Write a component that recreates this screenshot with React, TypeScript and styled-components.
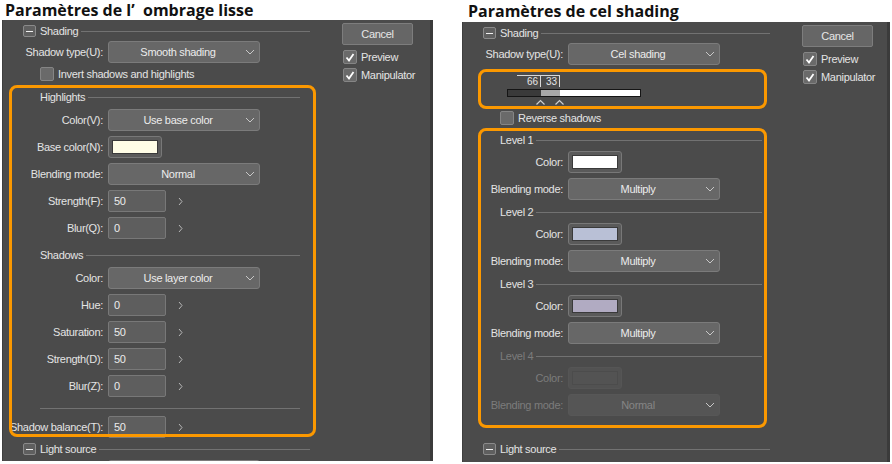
import React from 'react';
import styled, { createGlobalStyle } from 'styled-components';

const UI_FONT = `"Liberation Sans", Arial, sans-serif`;
const ORANGE = '#fb9800';

const GlobalStyle = createGlobalStyle`
  html, body { margin: 0; padding: 0; background: #fff; }
  body { width: 892px; height: 464px; overflow: hidden; }
`;

const Page = styled.div`
  display: flex;
  align-items: flex-start;
  width: 892px;
  height: 464px;
`;

const Column = styled.section<{ $width: number; $gap: number }>`
  width: ${p => p.$width}px;
  margin-left: ${p => p.$gap}px;
  display: flex;
  flex-direction: column;
  flex: none;
`;

const Title = styled.h1<{ $h: number; $indent: number; $top: number }>`
  margin: 0;
  height: ${p => p.$h}px;
  box-sizing: border-box;
  padding: ${p => p.$top}px 0 0 ${p => p.$indent}px;
  font: 700 16px/20px "Open Sans", "Noto Sans", sans-serif;
  color: #111;
  white-space: nowrap;
  flex: none;
`;

const Dialog = styled.div<{ $h: number }>`
  display: flex;
  height: ${p => p.$h}px;
  flex: none;
  background: #4b4b4b;
  box-shadow: inset 1px 0 #3e3e3e, inset -3px 0 #3b3b3b;
  overflow: hidden;
  font: 11px ${UI_FONT};
  letter-spacing: -0.3px;
  color: #e4e4e4;
`;

const Form = styled.div`
  width: 316px;
  flex: none;
  display: flex;
  flex-direction: column;
  padding-top: 4px;
  & > * { flex-shrink: 0; }
`;

const Side = styled.div`
  margin-left: 24px;
  padding-top: 3px;
  display: flex;
  flex-direction: column;
`;

const CancelButton = styled.div`
  width: 71px;
  height: 22px;
  box-sizing: border-box;
  background: #666;
  border: 1px solid #7d7d7d;
  border-radius: 2px;
  display: flex;
  align-items: center;
  justify-content: center;
  color: #e6e6e6;
`;

const SectionHeader = styled.div<{ $mt?: number }>`
  display: flex;
  align-items: center;
  height: 14px;
  margin-top: ${p => p.$mt ?? 0}px;
  padding-left: 21px;
  padding-right: 8px;
`;

const MinusBox = styled.span`
  width: 13px;
  height: 12px;
  box-sizing: border-box;
  background: #5f5f5f;
  border: 1px solid #8a8a8a;
  border-radius: 2px;
  margin-right: 4px;
  display: flex;
  align-items: center;
  justify-content: center;
  &::before {
    content: '';
    width: 7px;
    height: 1px;
    background: #f0f0f0;
  }
`;

const Rule = styled.span`
  flex: 1;
  height: 1px;
  background: #727272;
  margin-left: 3px;
`;

const SubHeader = styled.div<{ $mt?: number; $dim?: boolean; $end?: number }>`
  display: flex;
  align-items: center;
  height: 14px;
  flex: none;
  margin-top: ${p => p.$mt ?? 0}px;
  padding-left: 38px;
  padding-right: ${p => p.$end ?? 18}px;
  color: ${p => (p.$dim ? '#7c7c7c' : '#e4e4e4')};
`;

const Separator = styled.div<{ $mt: number }>`
  height: 1px;
  flex: none;
  background: #727272;
  margin: ${p => p.$mt}px 18px 0 38px;
`;

const Row = styled.div<{ $mt?: number }>`
  display: flex;
  align-items: center;
  height: 22px;
  margin-top: ${p => p.$mt ?? 5}px;
  flex: none;
`;

const Label = styled.span<{ $dim?: boolean }>`
  width: 101px;
  margin-right: 5px;
  flex: none;
  display: flex;
  justify-content: flex-end;
  white-space: nowrap;
  color: ${p => (p.$dim ? '#7c7c7c' : '#e4e4e4')};
`;

const SelectBox = styled.div<{ $dim?: boolean }>`
  width: 152px;
  height: 22px;
  box-sizing: border-box;
  flex: none;
  display: flex;
  align-items: center;
  background: ${p => (p.$dim ? '#555' : '#676767')};
  border: 1px solid ${p => (p.$dim ? '#575757' : '#7b7b7b')};
  border-radius: 3px;
  color: ${p => (p.$dim ? '#858585' : '#ececec')};
  svg { margin-right: 4px; flex: none; }
`;

const SelectText = styled.span`
  flex: 1;
  text-align: center;
  padding-left: 2px;
`;

const NumberBox = styled.div`
  width: 58px;
  height: 22px;
  box-sizing: border-box;
  flex: none;
  display: flex;
  align-items: center;
  padding-left: 5px;
  background: #5e5e5e;
  border: 1px solid #787878;
  border-radius: 2px;
  color: #ececec;
`;

const Step = styled.span`
  margin-left: 12px;
  display: flex;
`;

const Swatch = styled.div<{ $dim?: boolean }>`
  width: 54px;
  height: 22px;
  box-sizing: border-box;
  flex: none;
  padding: 3px;
  background: ${p => (p.$dim ? '#525252' : '#5a5a5a')};
  border: 1px solid ${p => (p.$dim ? '#555' : '#787878')};
  border-radius: 3px;
`;

const SwatchFill = styled.div<{ $color: string; $dim?: boolean }>`
  height: 100%;
  box-sizing: border-box;
  background: ${p => p.$color};
  border: 1px solid ${p => (p.$dim ? '#4c4c4c' : '#3a3a3a')};
`;

const CheckRow = styled.div<{ $mt?: number; $indent?: number }>`
  display: flex;
  align-items: center;
  height: 14px;
  flex: none;
  margin-top: ${p => p.$mt ?? 0}px;
  padding-left: ${p => p.$indent ?? 38}px;
  white-space: nowrap;
`;

const Box = styled.span`
  width: 14px;
  height: 14px;
  box-sizing: border-box;
  flex: none;
  background: #6a6a6a;
  border: 1px solid #858585;
  border-radius: 2px;
  margin-right: 4px;
  display: flex;
  align-items: center;
  justify-content: center;
`;

const Group = styled.div<{ $mt: number; $pt: number; $pb?: number; $l: number; $r: number; $b?: number }>`
  position: relative;
  margin-top: ${p => p.$mt}px;
  padding: ${p => p.$pt}px 0 ${p => p.$pb ?? 0}px;
  display: flex;
  flex-direction: column;
  &::after {
    content: '';
    position: absolute;
    top: 0;
    left: ${p => p.$l}px;
    right: ${p => p.$r}px;
    bottom: ${p => p.$b ?? 0}px;
    border: 3px solid ${ORANGE};
    border-radius: 8px;
    pointer-events: none;
  }
`;

const SliderValues = styled.div`
  display: flex;
  flex: none;
  margin-left: 55px;
  height: 12px;
`;

const ValueCell = styled.span<{ $w: number }>`
  width: ${p => p.$w}px;
  box-sizing: border-box;
  border-top: 1px solid #d8d8d8;
  border-right: 1px solid #d8d8d8;
  font-size: 10px;
  line-height: 11px;
  text-align: right;
  padding-right: 2px;
  letter-spacing: 0;
`;

const Bar = styled.div`
  display: flex;
  flex: none;
  margin: 2px 0 0 45px;
  width: 134px;
  height: 8px;
  box-sizing: border-box;
  border: 1px solid #151515;
`;

const BarPart = styled.span<{ $w?: number; $color: string }>`
  width: ${p => (p.$w ? `${p.$w}px` : 'auto')};
  flex: ${p => (p.$w ? 'none' : 1)};
  background: ${p => p.$color};
`;

const Carets = styled.div`
  display: flex;
  flex: none;
  gap: 10px;
  margin: 2px 0 0 74px;
  height: 7px;
`;

const ChevronDown = () => (
  <svg width="10" height="6" viewBox="0 0 10 6">
    <polyline points="1,1 5,5 9,1" fill="none" stroke="#c8c8c8" strokeWidth="1" />
  </svg>
);

const ChevronRight = () => (
  <svg width="5" height="9" viewBox="0 0 5 9">
    <polyline points="1,1 4,4.5 1,8" fill="none" stroke="#b8b8b8" strokeWidth="1" />
  </svg>
);

const Caret = () => (
  <svg width="9" height="6" viewBox="0 0 9 6">
    <polyline points="0.5,5.5 4.5,1.5 8.5,5.5" fill="none" stroke="#cfcfcf" strokeWidth="1.2" />
  </svg>
);

const Check = () => (
  <svg width="10" height="9" viewBox="0 0 10 9">
    <polyline points="1.5,4.5 4,7.5 8.5,1" fill="none" stroke="#fff" strokeWidth="1.8" />
  </svg>
);

const Select = ({ label, value, mt, dim }: { label: string; value: string; mt?: number; dim?: boolean }) => (
  <Row $mt={mt}>
    <Label $dim={dim}>{label}</Label>
    <SelectBox $dim={dim}>
      <SelectText>{value}</SelectText>
      <ChevronDown />
    </SelectBox>
  </Row>
);

const NumberField = ({ label, value, mt }: { label: string; value: string; mt?: number }) => (
  <Row $mt={mt}>
    <Label>{label}</Label>
    <NumberBox>{value}</NumberBox>
    <Step><ChevronRight /></Step>
  </Row>
);

const ColorField = ({ label, color, mt, dim }: { label: string; color: string; mt?: number; dim?: boolean }) => (
  <Row $mt={mt}>
    <Label $dim={dim}>{label}</Label>
    <Swatch $dim={dim}><SwatchFill $color={color} $dim={dim} /></Swatch>
  </Row>
);

const SideButtons = () => (
  <Side>
    <CancelButton>Cancel</CancelButton>
    <CheckRow $mt={5} $indent={1}><Box><Check /></Box><span>Preview</span></CheckRow>
    <CheckRow $mt={4} $indent={1}><Box><Check /></Box><span>Manipulator</span></CheckRow>
  </Side>
);

const Level = ({ n, color, mode, dim, first }: { n: number; color: string; mode: string; dim?: boolean; first?: boolean }) => (
  <>
    <SubHeader $mt={first ? 0 : 5} $dim={dim} $end={16}>Level {n}<Rule /></SubHeader>
    <ColorField label="Color:" color={color} mt={4} dim={dim} />
    <Select label="Blending mode:" value={mode} dim={dim} />
  </>
);

const SmoothPanel = () => (
  <Dialog $h={441}>
    <Form>
      <SectionHeader><MinusBox />Shading<Rule /></SectionHeader>
      <Select label="Shadow type(U):" value="Smooth shading" mt={3} />
      <CheckRow $mt={4}><Box /><span>Invert shadows and highlights</span></CheckRow>
      <Group $mt={4} $pt={5} $l={7} $r={2} $b={1}>
        <SubHeader>Highlights<Rule /></SubHeader>
        <Select label="Color(V):" value="Use base color" />
        <ColorField label="Base color(N):" color="#fffde6" />
        <Select label="Blending mode:" value="Normal" />
        <NumberField label="Strength(F):" value="50" />
        <NumberField label="Blur(Q):" value="0" />
        <SubHeader $mt={9}>Shadows<Rule /></SubHeader>
        <Select label="Color:" value="Use layer color" />
        <NumberField label="Hue:" value="0" />
        <NumberField label="Saturation:" value="50" />
        <NumberField label="Strength(D):" value="50" />
        <NumberField label="Blur(Z):" value="0" />
        <Separator $mt={11} />
        <NumberField label="Shadow balance(T):" value="50" mt={7} />
      </Group>
      <SectionHeader $mt={4}><MinusBox />Light source<Rule /></SectionHeader>
      <Row $mt={4}>
        <Label />
        <SelectBox />
      </Row>
    </Form>
    <SideButtons />
  </Dialog>
);

const CelPanel = () => (
  <Dialog $h={440}>
    <Form>
      <SectionHeader><MinusBox />Shading<Rule /></SectionHeader>
      <Select label="Shadow type(U):" value="Cel shading" mt={3} />
      <Group $mt={4} $pt={6} $pb={3} $l={16} $r={11}>
        <SliderValues>
          <ValueCell $w={24}>66</ValueCell>
          <ValueCell $w={19}>33</ValueCell>
        </SliderValues>
        <Bar>
          <BarPart $w={33} $color="#3a3a3a" />
          <BarPart $w={19} $color="#a8a8a8" />
          <BarPart $color="#ffffff" />
        </Bar>
        <Carets><Caret /><Caret /></Carets>
      </Group>
      <CheckRow $mt={2}><Box /><span>Reverse shadows</span></CheckRow>
      <Group $mt={3} $pt={5} $pb={12} $l={16} $r={11}>
        <Level n={1} color="#ffffff" mode="Multiply" first />
        <Level n={2} color="#b9c0d6" mode="Multiply" />
        <Level n={3} color="#b1abc2" mode="Multiply" />
        <Level n={4} color="#535353" mode="Normal" dim />
      </Group>
      <SectionHeader $mt={14}><MinusBox />Light source<Rule /></SectionHeader>
    </Form>
    <SideButtons />
  </Dialog>
);

const App = () => (
  <>
    <GlobalStyle />
    <Page>
      <Column $width={431} $gap={2}>
        <Title $h={20} $indent={3} $top={0}>Paramètres de l’&nbsp; ombrage lisse</Title>
        <SmoothPanel />
      </Column>
      <Column $width={428} $gap={29}>
        <Title $h={22} $indent={6} $top={1}>Paramètres de cel shading</Title>
        <CelPanel />
      </Column>
    </Page>
  </>
);

export default App;
